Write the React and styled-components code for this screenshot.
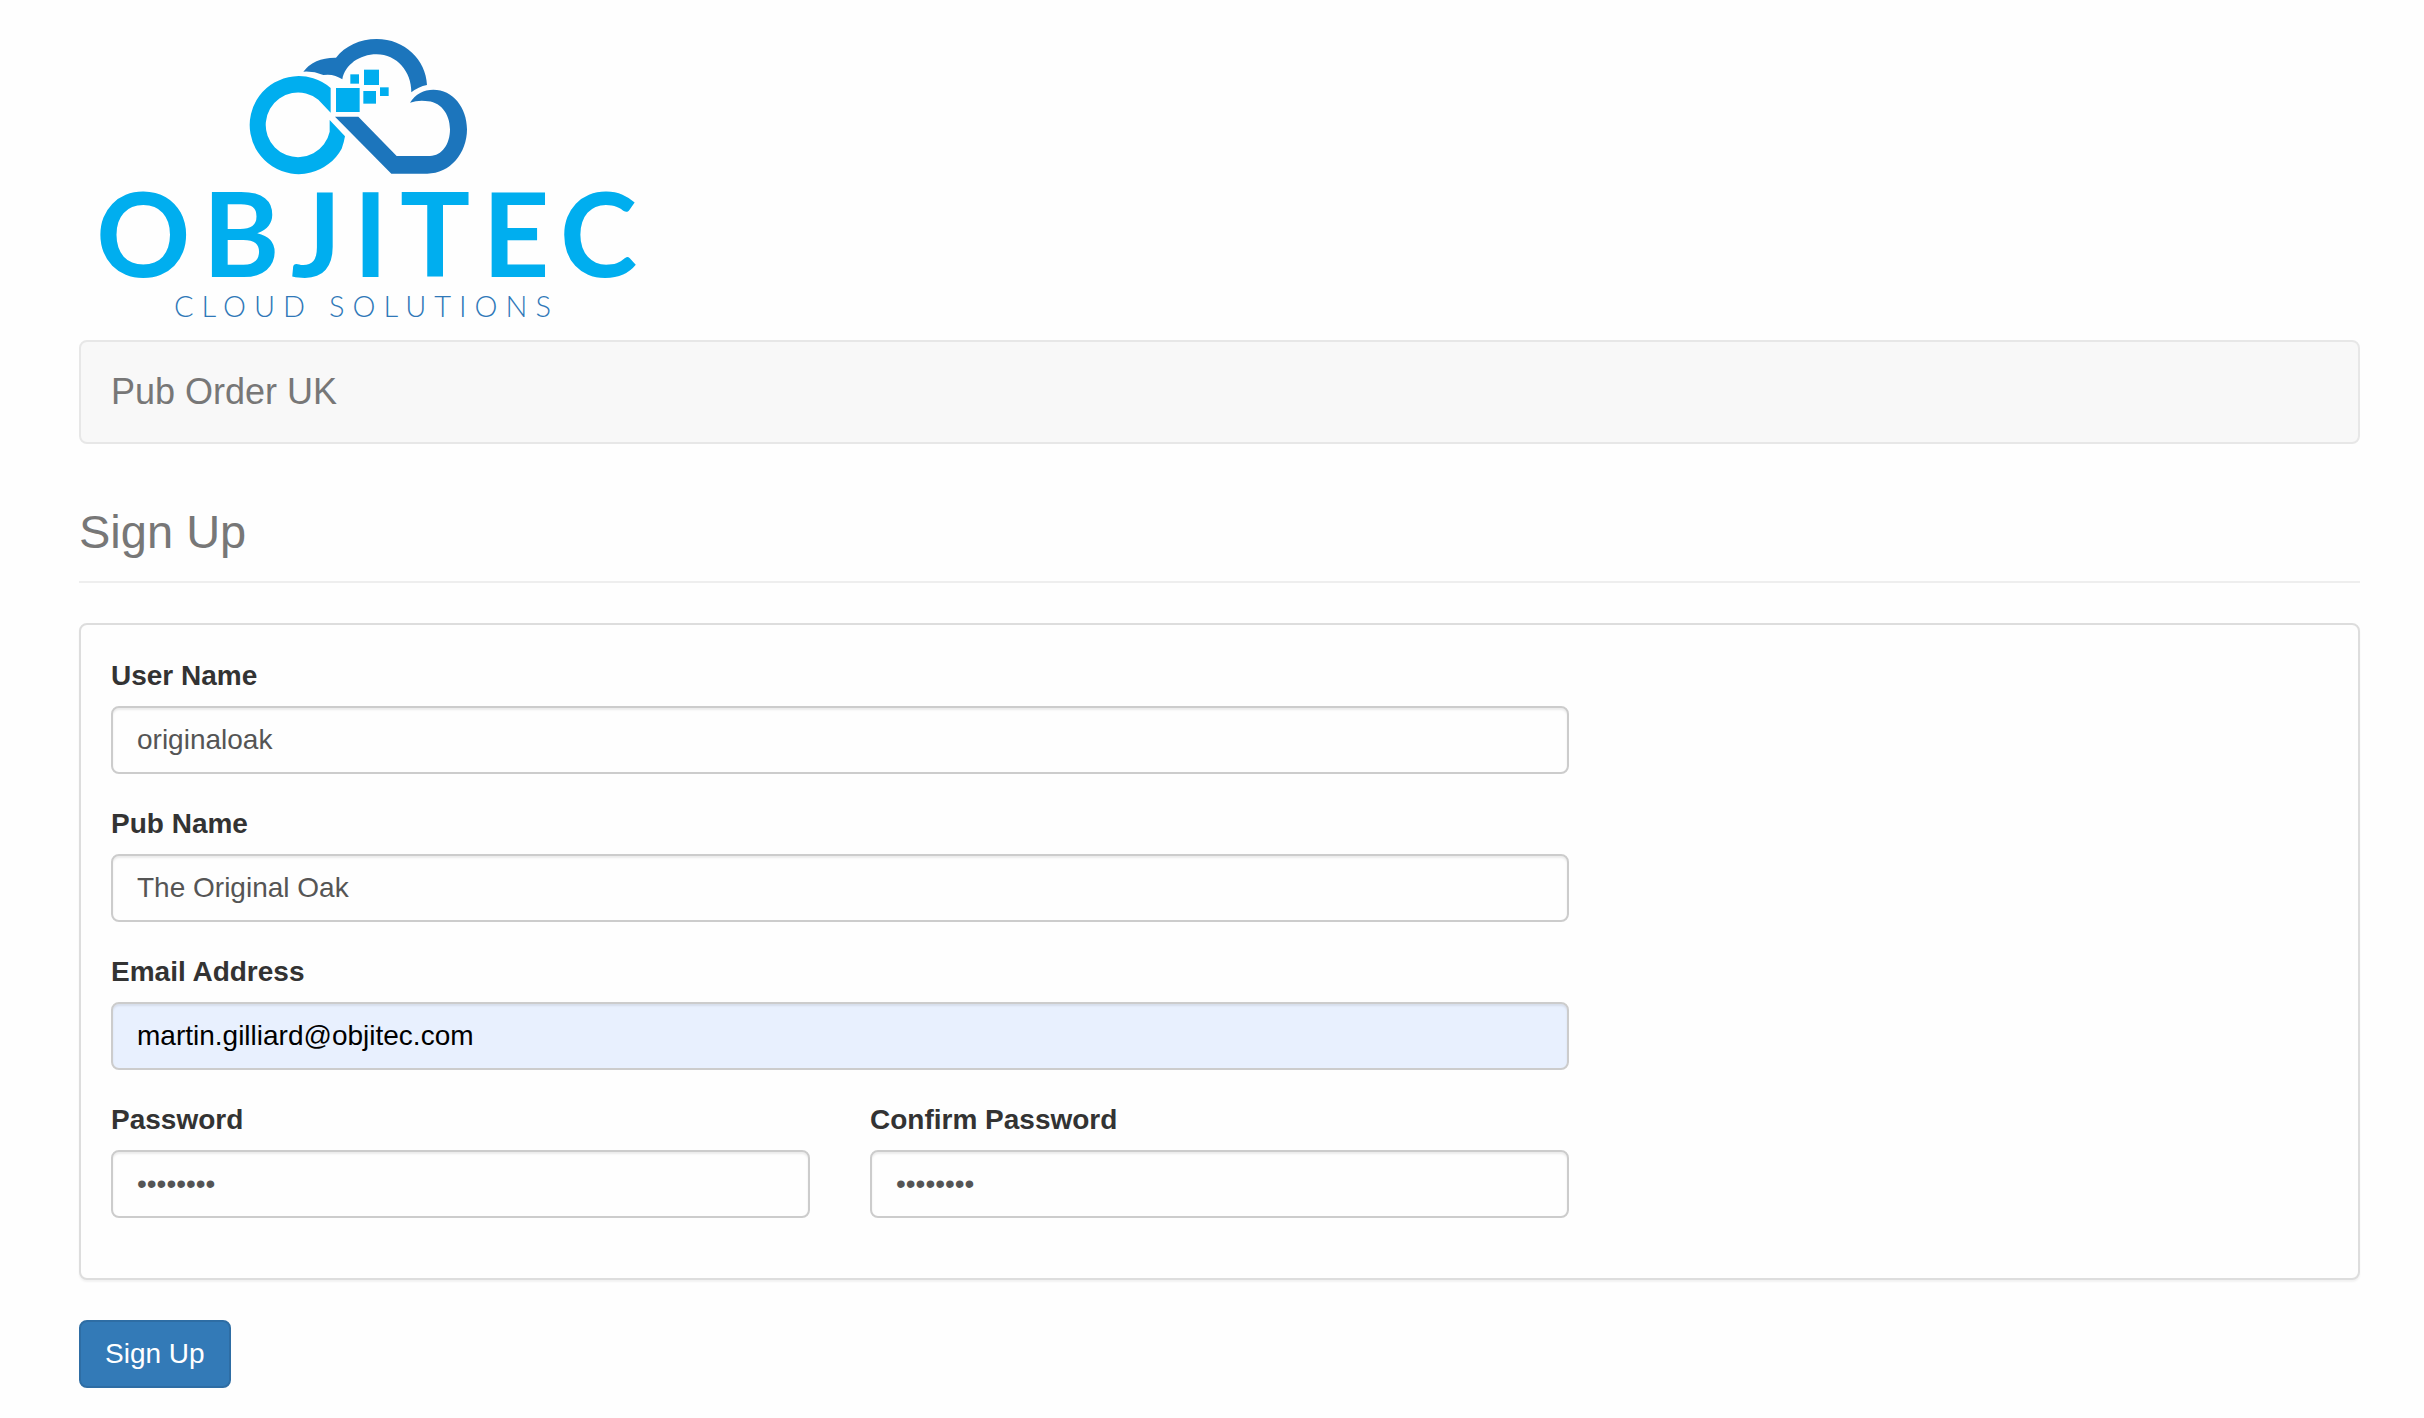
import React, { useState } from 'react';
import styled, { createGlobalStyle } from 'styled-components';

const GlobalStyle = createGlobalStyle`
  *, *::before, *::after { box-sizing: border-box; }
  body {
    margin: 0;
    background: #fefefe;
    color: #333;
    font: 28px/40px "Liberation Sans", Arial, sans-serif;
  }
`;

const Page = styled.div`
  padding: 0 64px 30px 79px;
`;

const LogoLink = styled.a`
  display: block;
  width: 600px;
  margin-bottom: 8px;
`;

const LogoArt = styled.svg`
  display: block;
  width: 600px;
  height: 332px;
`;

const Wordmark = styled.text`
  font-family: Lato, sans-serif;
  font-weight: 700;
  font-size: 117px;
  letter-spacing: 12px;
  fill: #00aeef;
`;

const Tagline = styled.text`
  font-family: Lato, sans-serif;
  font-weight: 300;
  font-size: 29px;
  letter-spacing: 8px;
  fill: #2f78b8;
`;

const Navbar = styled.nav`
  display: flex;
  align-items: center;
  height: 104px;
  padding: 0 30px;
  background: #f8f8f8;
  border: 2px solid #e7e7e7;
  border-radius: 8px;
`;

const NavBrand = styled.a`
  color: #777;
  font-size: 36px;
  line-height: 40px;
  text-decoration: none;
`;

const PageTitle = styled.h1`
  margin: 60px 0 40px;
  padding-bottom: 22px;
  border-bottom: 2px solid #eee;
  color: #777;
  font-size: 47px;
  font-weight: 400;
  line-height: 55px;
`;

const Panel = styled.div`
  padding: 31px 30px 30px;
  background: #fefefe;
  border: 2px solid #ddd;
  border-radius: 8px;
  box-shadow: 0 2px 2px rgba(0, 0, 0, 0.05);
`;

const Fields = styled.div`
  display: grid;
  grid-template-columns: 1fr 1fr;
  column-gap: 60px;
  row-gap: 30px;
  width: calc((100% + 60px) * 2 / 3 - 60px);
  padding-bottom: 30px;
`;

const Field = styled.div`
  display: flex;
  flex-direction: column;
  gap: 10px;
  grid-column: ${(p) => (p.$half ? 'auto' : '1 / -1')};
`;

const Label = styled.label`
  font-weight: 700;
`;

const Input = styled.input`
  width: 100%;
  height: 68px;
  padding: 12px 24px;
  color: ${(p) => (p.$autofilled ? '#000' : '#555')};
  background: ${(p) => (p.$autofilled ? '#e8f0fe' : '#fefefe')};
  border: 2px solid #ccc;
  border-radius: 8px;
  box-shadow: inset 0 2px 2px rgba(0, 0, 0, 0.075);
  font: inherit;
  outline: none;
`;

const SubmitButton = styled.button`
  display: block;
  height: 68px;
  margin-top: 40px;
  padding: 0 24px;
  color: #fff;
  background: #337ab7;
  border: 2px solid #2e6da4;
  border-radius: 8px;
  font: inherit;
  cursor: pointer;
`;

const fields = [
  { id: 'userName', label: 'User Name', type: 'text', initial: 'originaloak' },
  { id: 'pubName', label: 'Pub Name', type: 'text', initial: 'The Original Oak' },
  { id: 'email', label: 'Email Address', type: 'email', initial: 'martin.gilliard@objitec.com', autofilled: true },
  { id: 'password', label: 'Password', type: 'password', initial: 'password', half: true },
  { id: 'confirm', label: 'Confirm Password', type: 'password', initial: 'password', half: true },
];

function Logo() {
  return (
    <LogoArt viewBox="79 0 600 332" role="img" aria-label="Objitec Cloud Solutions">
      <g transform="translate(230 20) scale(0.33333)">
        <path
          fill="#00aeef"
          d="M302 204A147 147 0 1 0 335 386Q342 368 345 349L299 300V335A97 97 0 1 1 265 239L302 278Z"
        />
        <path
          fill="#1c75bc"
          d="M220 155Q252 112 318 113C345 78 390 57 440 57C525 57 588 120 591 195Q565 200 544 217C545 155 500 103 440 103C388 103 345 135 337 178Q312 160 280 165Q250 153 220 155Z"
        />
        <path
          fill="#1c75bc"
          d="M540 248C556 222 582 209 610 209C668 209 711 262 711 328C711 400 660 461 592 461H484L315 290H385L500 408H600C636 408 660 372 660 328C660 280 630 243 586 243Q562 241 540 248Z"
        />
        <g fill="#00aeef">
          <rect x="318" y="204" width="71" height="72" />
          <rect x="402" y="149" width="45" height="46" />
          <rect x="361" y="163" width="26" height="28" />
          <rect x="400" y="213" width="38" height="38" />
          <rect x="450" y="202" width="26" height="26" />
        </g>
      </g>
      <Wordmark x="96" y="277">OBJITEC</Wordmark>
      <Tagline x="174" y="317">CLOUD SOLUTIONS</Tagline>
    </LogoArt>
  );
}

export default function App() {
  const [values, setValues] = useState(() =>
    Object.fromEntries(fields.map((f) => [f.id, f.initial]))
  );

  return (
    <>
      <GlobalStyle />
      <Page>
        <LogoLink href="#home">
          <Logo />
        </LogoLink>
        <Navbar>
          <NavBrand href="#home">Pub Order UK</NavBrand>
        </Navbar>
        <PageTitle>Sign Up</PageTitle>
        <form onSubmit={(e) => e.preventDefault()}>
          <Panel>
            <Fields>
              {fields.map((f) => (
                <Field key={f.id} $half={f.half}>
                  <Label htmlFor={f.id}>{f.label}</Label>
                  <Input
                    id={f.id}
                    type={f.type}
                    value={values[f.id]}
                    $autofilled={f.autofilled}
                    onChange={(e) => setValues({ ...values, [f.id]: e.target.value })}
                  />
                </Field>
              ))}
            </Fields>
          </Panel>
          <SubmitButton type="submit">Sign Up</SubmitButton>
        </form>
      </Page>
    </>
  );
}
